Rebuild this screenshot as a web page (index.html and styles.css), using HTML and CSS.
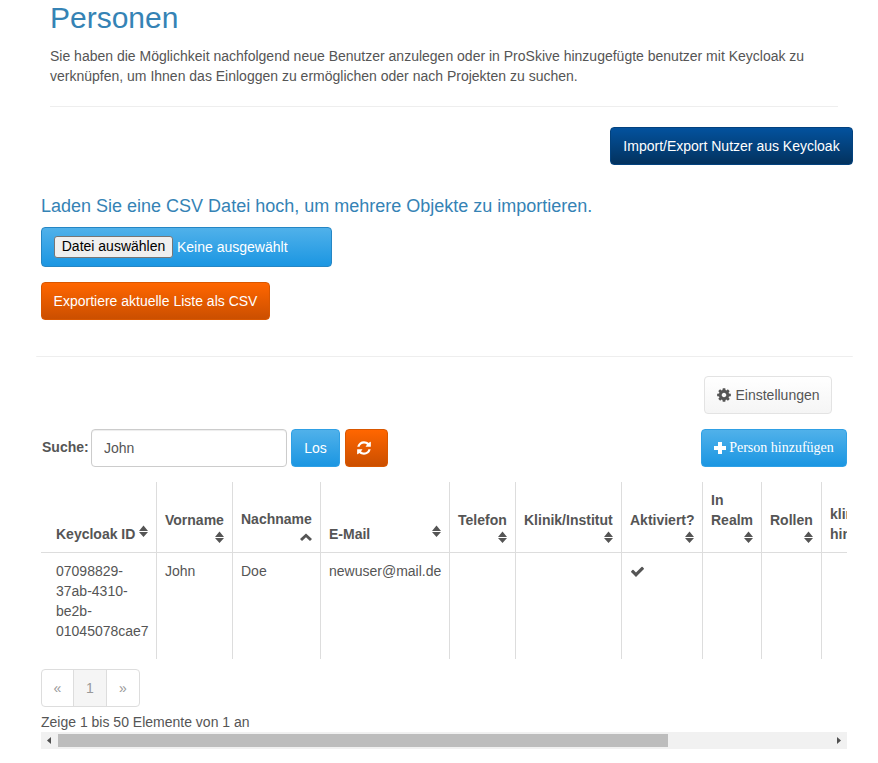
FILE: index.html

```html
<!DOCTYPE html>
<html lang="de">
<head>
    <meta charset="utf-8">
    <title>Personen</title>
    <link rel="stylesheet" href="styles.css">
</head>
<body>

<svg class="sprite" xmlns="http://www.w3.org/2000/svg">
    <symbol id="i-sort" viewBox="0 0 9 14">
        <path d="M4.5 1.5 L9 7 H0 Z M0 8 H9 L4.5 13 Z"/>
    </symbol>
</svg>

<div class="page">
    <div class="intro">
        <h1>Personen</h1>
        <p>Sie haben die Möglichkeit nachfolgend neue Benutzer anzulegen oder in ProSkive hinzugefügte benutzer mit Keycloak zu verknüpfen, um Ihnen das Einloggen zu ermöglichen oder nach Projekten zu suchen.</p>
        <hr class="intro-line">
    </div>

    <div class="import-row">
        <a class="btn btn-navy">Import/Export Nutzer aus Keycloak</a>
    </div>

    <h4>Laden Sie eine CSV Datei hoch, um mehrere Objekte zu importieren.</h4>
    <div class="upload">
        <span class="file-button">Datei auswählen</span>
        <span class="file-name">Keine ausgewählt</span>
    </div>
    <a class="btn btn-orange export">Exportiere aktuelle Liste als CSV</a>

    <div class="section-line"></div>

    <div class="settings-row">
        <a class="btn btn-light">
            <svg class="icon-gear" viewBox="0 0 1792 1792"><path d="M1152 896q0-106-75-181t-181-75-181 75-75 181 75 181 181 75 181-75 75-181zm512-109v222q0 12-8 23t-20 13l-185 28q-19 54-39 91 35 50 107 138 10 12 10 25t-9 23q-27 37-99 108t-94 71q-12 0-26-9l-138-108q-44 23-91 38-16 136-29 186-7 28-36 28h-222q-14 0-24.5-8.5t-11.5-21.5l-28-184q-49-16-90-37l-141 107q-10 9-25 9-14 0-25-11-126-114-165-168-7-10-7-23 0-12 8-23 15-21 51-66.5t54-70.5q-27-50-41-99l-183-27q-13-2-21-12.5t-8-23.5v-222q0-12 8-23t19-13l186-28q14-46 39-92-40-57-107-138-10-12-10-24 0-10 9-23 26-36 98.5-107.5t94.5-71.5q13 0 26 10l138 107q44-23 91-38 16-136 29-186 7-28 36-28h222q14 0 24.5 8.5t11.5 21.5l28 184q49 16 90 37l142-107q9-9 24-9 13 0 25 10 129 119 165 170 7 8 7 22 0 12-8 23-15 21-51 66.5t-54 70.5q26 50 41 98l183 28q13 2 21 12.5t8 23.5z"/></svg>
            Einstellungen
        </a>
    </div>

    <div class="search-row">
        <label class="search-label" for="search">Suche:</label>
        <input class="search-input" id="search" type="text" value="John">
        <a class="btn btn-blue btn-go">Los</a>
        <a class="btn btn-orange btn-reset">
            <svg class="icon-refresh" viewBox="0 0 1792 1792"><path d="M1639 1056q0 5-1 7-64 268-268 434.5t-478 166.5q-146 0-282.5-55t-243.5-157l-129 129q-19 19-45 19t-45-19-19-45v-448q0-26 19-45t45-19h448q26 0 45 19t19 45-19 45l-137 137q71 66 161 102t187 36q134 0 250-65t186-179q11-17 53-117 8-23 30-23h192q13 0 22.5 9.5t9.5 22.5zm25-800v448q0 26-19 45t-45 19h-448q-26 0-45-19t-19-45 19-45l138-138q-148-137-349-137-134 0-250 65t-186 179q-11 17-53 117-8 23-30 23h-199q-13 0-22.5-9.5t-9.5-22.5v-7q65-268 270-434.5t480-166.5q146 0 284 55.5t245 156.5l130-129q19-19 45-19t45 19 19 45z"/></svg>
        </a>
        <a class="btn btn-blue btn-add">
            <svg class="icon-plus" viewBox="0 0 12 12"><path d="M4 0 H8 V4 H12 V8 H8 V12 H4 V8 H0 V4 H4 Z"/></svg>
            Person hinzufügen
        </a>
    </div>

    <div class="table-box">
        <table class="persons">
            <thead>
                <tr>
                    <th>Keycloak ID<svg class="sort"><use href="#i-sort"/></svg></th>
                    <th>Vorname<svg class="sort"><use href="#i-sort"/></svg></th>
                    <th>Nachname<svg class="sort-up" viewBox="0 0 12 8"><path d="M6 0.5 L12 6 L10 8 L6 4.2 L2 8 L0 6 Z"/></svg></th>
                    <th>E-Mail<svg class="sort"><use href="#i-sort"/></svg></th>
                    <th>Telefon<svg class="sort"><use href="#i-sort"/></svg></th>
                    <th>Klinik/Institut<svg class="sort"><use href="#i-sort"/></svg></th>
                    <th>Aktiviert?<svg class="sort"><use href="#i-sort"/></svg></th>
                    <th>In Realm<svg class="sort"><use href="#i-sort"/></svg></th>
                    <th>Rollen<svg class="sort"><use href="#i-sort"/></svg></th>
                    <th>klinik hinzufügen</th>
                    <th>Aktionen</th>
                </tr>
            </thead>
            <tbody>
                <tr>
                    <td>07098829-37ab-4310-be2b-01045078cae7</td>
                    <td>John</td>
                    <td>Doe</td>
                    <td>newuser@mail.de</td>
                    <td></td>
                    <td></td>
                    <td><svg class="icon-check" viewBox="0 0 1792 1792"><path d="M1671 566q0 40-28 68l-724 724-136 136q-28 28-68 28t-68-28l-136-136-362-362q-28-28-28-68t28-68l136-136q28-28 68-28t68 28l294 295 656-657q28-28 68-28t68 28l136 136q28 28 28 68z"/></svg></td>
                    <td></td>
                    <td></td>
                    <td></td>
                    <td></td>
                </tr>
            </tbody>
        </table>
    </div>

    <ul class="pager">
        <li>«</li>
        <li class="active">1</li>
        <li>»</li>
    </ul>
    <div class="pager-info">Zeige 1 bis 50 Elemente von 1 an</div>

    <div class="scrollbar">
        <span class="arrow arrow-left"></span>
        <span class="thumb"></span>
        <span class="rest"></span>
        <span class="arrow arrow-right"></span>
    </div>
</div>

</body>
</html>
```

FILE: styles.css

```css
body {
    margin: 0;
    font-family: "Liberation Sans", Arial, sans-serif;
    font-size: 14px;
    line-height: 20px;
    color: #555;
    background: #fff;
}

.sprite {
    display: none;
}

.page {
    padding: 1px 25px 0 41px;
}

.intro {
    margin: 0 15px 0 9px;
}

h1 {
    margin: 0 0 12px;
    font-size: 30px;
    font-weight: normal;
    line-height: 33px;
    color: #3583b5;
}

.intro p {
    margin: 0;
}

.intro-line {
    margin: 20px 0;
    height: 1px;
    border: none;
    background: #eee;
}

.import-row {
    display: flex;
    justify-content: flex-end;
}

h4 {
    margin: 31px 0 11px;
    font-size: 18px;
    font-weight: normal;
    line-height: 20px;
    color: #3583b5;
}

/* buttons */
.btn {
    display: inline-flex;
    align-items: center;
    justify-content: center;
    box-sizing: border-box;
    height: 38px;
    padding: 0 12px;
    border: 1px solid;
    border-radius: 4px;
    color: #fff;
    white-space: nowrap;
    cursor: pointer;
}

.btn-navy {
    width: 243px;
    background: linear-gradient(#03529e, #03325e);
    border-color: #03427e;
}

.btn-orange {
    background: linear-gradient(#ff6600, #cb4f00);
    border-color: #d95700;
}

.btn-blue {
    background: linear-gradient(#50b1ea, #1b96e2);
    border-color: #2fa0e5;
}

.btn-light {
    width: 128px;
    padding: 0;
    gap: 3px;
    background: linear-gradient(#fff, #f5f5f5);
    border-color: #e3e3e3;
    color: #555;
}

.upload {
    display: flex;
    align-items: center;
    box-sizing: border-box;
    width: 291px;
    height: 40px;
    padding-left: 12px;
    border: 1px solid #2586c4;
    border-radius: 4px;
    background: linear-gradient(#50b1ea, #1b96e2);
    color: #fff;
}

.file-button {
    box-sizing: border-box;
    width: 119px;
    height: 22px;
    margin-right: 4px;
    border: 1px solid #767676;
    border-radius: 3px;
    background: #efefef;
    color: #000;
    line-height: 19px;
    text-align: center;
}

.export {
    display: flex;
    width: 229px;
    margin-top: 15px;
    padding: 0;
}

.section-line {
    height: 1px;
    margin: 36px 0 19px -5px;
    border-radius: 0 0 4px 4px;
    background: #eee;
}

.settings-row {
    display: flex;
    justify-content: flex-end;
    padding-right: 21px;
}

.icon-gear {
    width: 16px;
    height: 16px;
    fill: #555;
}

/* search */
.search-row {
    display: flex;
    align-items: center;
    margin: 15px 6px 15px 0;
}

.search-label {
    width: 49px;
    padding-left: 1px;
    font-weight: bold;
    position: relative;
    top: -1px;
}

.search-input {
    box-sizing: border-box;
    width: 196px;
    height: 38px;
    padding: 0 12px;
    border: 1px solid #ccc;
    border-radius: 4px;
    font: 14px "Liberation Sans", Arial, sans-serif;
    color: #555;
    box-shadow: inset 0 1px 1px rgba(0, 0, 0, 0.075);
}

.btn-go {
    width: 49px;
    margin-left: 4px;
}

.btn-reset {
    justify-content: flex-start;
    width: 43px;
    margin-left: 5px;
    padding: 0 0 0 10px;
}

.icon-refresh {
    width: 16px;
    height: 16px;
    fill: #fff;
}

.btn-add {
    width: 146px;
    margin-left: auto;
    padding: 0;
    gap: 3px;
    font-family: "Liberation Serif", "Times New Roman", serif;
    font-size: 14px;
}

.icon-plus {
    width: 12px;
    height: 12px;
    fill: #fff;
}

/* table */
.table-box {
    width: 806px;
    overflow: hidden;
}

.persons {
    table-layout: fixed;
    width: 1020px;
    border-collapse: separate;
    border-spacing: 0;
}

.persons th,
.persons td {
    box-sizing: border-box;
    padding: 8px;
    border-right: 1px solid #ddd;
    text-align: left;
    vertical-align: bottom;
}

.persons th {
    border-bottom: 1px solid #ddd;
}

.persons td {
    padding-bottom: 18px;
    vertical-align: top;
}

.persons th:first-child,
.persons td:first-child {
    padding-left: 15px;
}

.persons th:nth-child(1) { width: 116px; }
.persons th:nth-child(2) { width: 76px; }
.persons th:nth-child(3) { width: 88px; }
.persons th:nth-child(4) { width: 129px; }
.persons th:nth-child(5) { width: 66px; }
.persons th:nth-child(6) { width: 106px; }
.persons th:nth-child(7) { width: 81px; }
.persons th:nth-child(8) { width: 59px; }
.persons th:nth-child(9) { width: 60px; }
.persons th:nth-child(10) { width: 110px; }

.sort {
    float: right;
    width: 9px;
    height: 14px;
    fill: #555;
}

.sort-up {
    float: right;
    width: 12px;
    height: 14px;
    margin-top: 1px;
    fill: #555;
}

.icon-check {
    display: block;
    width: 15px;
    height: 15px;
    margin-top: 3px;
    fill: #555;
}

/* pagination */
.pager {
    display: flex;
    width: 99px;
    box-sizing: border-box;
    height: 38px;
    margin: 10px 0 5px;
    padding: 0;
    border: 1px solid #ddd;
    border-radius: 4px;
    list-style: none;
    color: #999;
}

.pager li {
    flex: 1;
    line-height: 36px;
    text-align: center;
}

.pager li:first-child {
    flex: 0 0 31px;
}

.pager li.active {
    flex: 0 0 34px;
    box-sizing: border-box;
    border-left: 1px solid #ddd;
    border-right: 1px solid #ddd;
    background: #f5f5f5;
}

/* scrollbar under the table */
.scrollbar {
    display: flex;
    align-items: center;
    box-sizing: border-box;
    width: 806px;
    height: 17px;
    background: #f1f1f1;
}

.arrow {
    flex: 0 0 17px;
    height: 7px;
    background: #505050;
}

.arrow-left {
    clip-path: polygon(6px 50%, 10px 0, 10px 100%);
}

.arrow-right {
    clip-path: polygon(7px 0, 11px 50%, 7px 100%);
}

.thumb {
    flex: 0 0 610px;
    height: 13px;
    background: #bdbdbd;
}

.rest {
    flex: 1;
}
```
